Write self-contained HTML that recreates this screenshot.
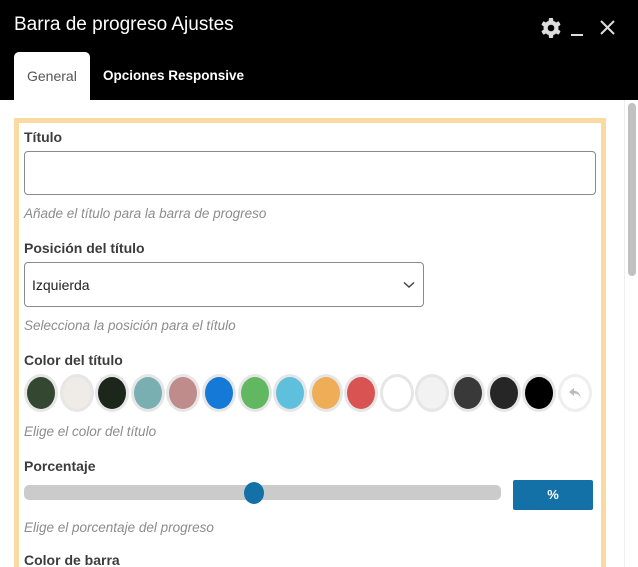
<!DOCTYPE html><html><head><meta charset="utf-8"><style>
*{margin:0;padding:0;box-sizing:border-box}
html,body{width:638px;height:567px;overflow:hidden}
body{background:#fff;font-family:"Liberation Sans",sans-serif;position:relative}
.a{position:absolute}
.lbl{position:absolute;left:24px;font-size:14px;font-weight:bold;color:#3c3c3c}
.hint{position:absolute;left:24px;font-size:13.5px;font-style:italic;color:#8c8c8c}
.sw{position:absolute;top:374px;width:34px;height:38px;border-radius:50%;background:#e6e6e6}
.sw i{position:absolute;left:3px;top:3px;width:28px;height:32px;border-radius:50%;display:block}
</style></head><body>
<div class="a" style="left:0;top:0;width:638px;height:100px;background:#000"></div>
<div class="a" style="left:14px;top:14px;font-size:19px;color:#fff">Barra de progreso Ajustes</div>
<svg class="a" style="left:540px;top:16px" width="80" height="24" viewBox="0 0 80 24">
<g fill="#ddd" transform="translate(11,12)">
<circle r="7.5"/>
<g><rect x="-2.2" y="-10" width="4.4" height="20" rx="1"/><rect x="-2.2" y="-10" width="4.4" height="20" rx="1" transform="rotate(60)"/><rect x="-2.2" y="-10" width="4.4" height="20" rx="1" transform="rotate(120)"/></g>
</g>
<circle cx="11" cy="12" r="3.3" fill="#000"/>
<rect x="31" y="18" width="12" height="2" fill="#ddd"/>
<path d="M61 5 L74 18 M74 5 L61 18" stroke="#ddd" stroke-width="2"/>
</svg>
<div class="a" style="left:14px;top:52px;width:76px;height:48px;background:#fff;border-radius:5px 5px 0 0"></div>
<div class="a" style="left:27px;top:68px;font-size:14px;color:#555">General</div>
<div class="a" style="left:103px;top:68px;font-size:13.5px;color:#fff;font-weight:bold">Opciones Responsive</div>
<div class="a" style="left:624px;top:100px;width:1px;height:467px;background:#eee"></div>
<div class="a" style="left:628px;top:103px;width:8px;height:173px;background:#c1c1c1;border-radius:4px"></div>
<div class="a" style="left:14px;top:118px;width:592px;height:449px;border:5px solid #fadaa0;border-bottom:0"></div>
<div class="lbl" style="top:129px">Título</div>
<div class="a" style="left:24px;top:151px;width:572px;height:44px;border:1px solid #8a8a8a;border-radius:4px"></div>
<div class="hint" style="top:206px">Añade el título para la barra de progreso</div>
<div class="lbl" style="top:240px">Posición del título</div>
<div class="a" style="left:24px;top:262px;width:400px;height:45px;border:1px solid #8a8a8a;border-radius:4px"></div>
<div class="a" style="left:32px;top:277px;font-size:14px;color:#222">Izquierda</div>
<svg class="a" style="left:403px;top:281px" width="12" height="8"><path d="M1 1.5 L6 6 L11 1.5" stroke="#444" stroke-width="1.5" fill="none"/></svg>
<div class="hint" style="top:318px">Selecciona la posición para el título</div>
<div class="lbl" style="top:352px">Color del título</div>
<div class="sw" style="left:24px"><i style="background:#334731"></i></div>
<div class="sw" style="left:60px"><i style="background:#efebe7"></i></div>
<div class="sw" style="left:95px"><i style="background:#1c261b"></i></div>
<div class="sw" style="left:131px"><i style="background:#7aafb1"></i></div>
<div class="sw" style="left:166px"><i style="background:#c08b8b"></i></div>
<div class="sw" style="left:202px"><i style="background:#1479d7"></i></div>
<div class="sw" style="left:238px"><i style="background:#61b861"></i></div>
<div class="sw" style="left:273px"><i style="background:#5fc0dd"></i></div>
<div class="sw" style="left:309px"><i style="background:#efad57"></i></div>
<div class="sw" style="left:344px"><i style="background:#d95353"></i></div>
<div class="sw" style="left:380px"><i style="background:#fff"></i></div>
<div class="sw" style="left:415px"><i style="background:#f2f2f2"></i></div>
<div class="sw" style="left:451px"><i style="background:#393939"></i></div>
<div class="sw" style="left:487px"><i style="background:#262626"></i></div>
<div class="sw" style="left:522px"><i style="background:#000"></i></div>
<div class="sw" style="left:558px;background:#eee"><i style="background:#fff"></i>
<svg class="a" style="left:10px;top:13px" width="14" height="12"><path d="M6 1 L1 5 L6 9 V6.5 C9 6.5 11 7.5 13 11 C12 6 9 4 6 3.8 Z" fill="#bbb"/></svg></div>
<div class="hint" style="top:424px">Elige el color del título</div>
<div class="lbl" style="top:458px">Porcentaje</div>
<div class="a" style="left:24px;top:485px;width:477px;height:15px;background:#cbcbcb;border-radius:5px"></div>
<div class="a" style="left:244px;top:482px;width:20px;height:22px;background:#1471a7;border-radius:50%"></div>
<div class="a" style="left:513px;top:480px;width:80px;height:30px;background:#1471a7;border-radius:2px;color:#fff;font-size:13px;font-weight:bold;text-align:center;line-height:30px">%</div>
<div class="hint" style="top:520px">Elige el porcentaje del progreso</div>
<div class="lbl" style="top:554px;line-height:13px;height:13px;overflow:hidden">Color de barra</div>
</body></html>
